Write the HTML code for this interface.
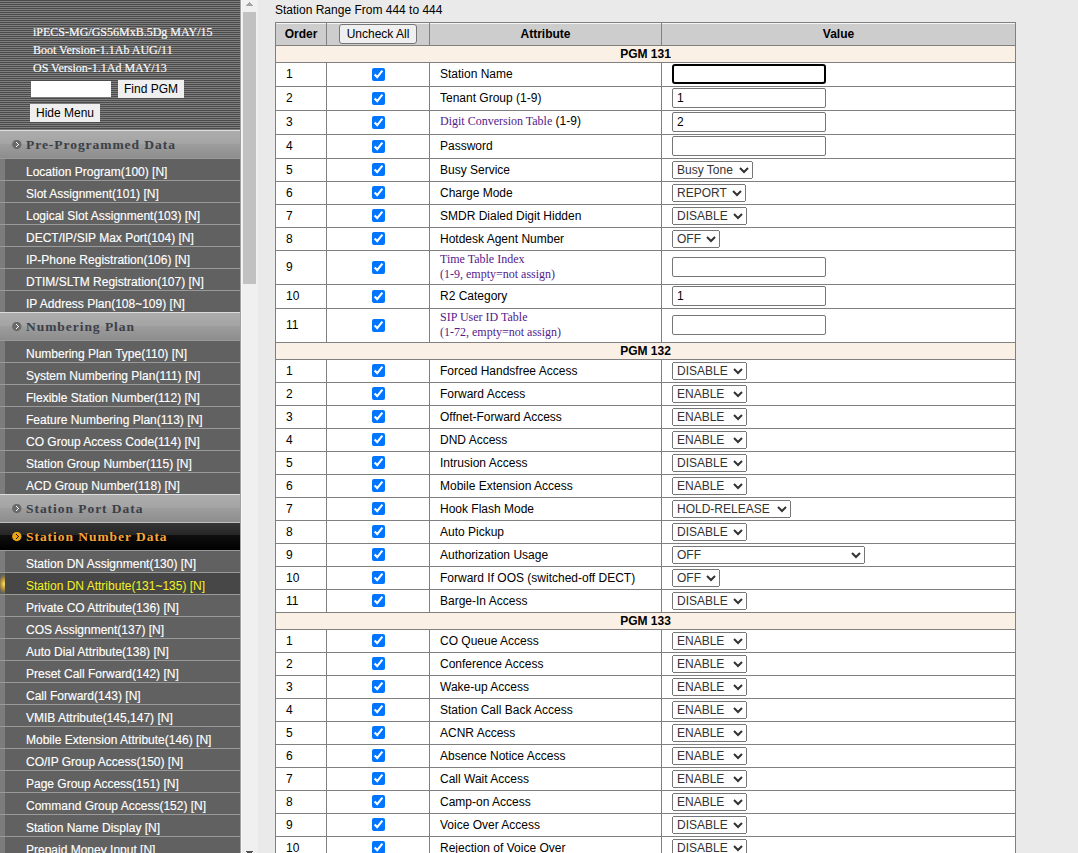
<!DOCTYPE html>
<html><head><meta charset="utf-8">
<style>
*{box-sizing:border-box}
html,body{margin:0;padding:0;width:1078px;height:853px;overflow:hidden;background:#eaeaea;font-family:"Liberation Sans",sans-serif}
#side{position:absolute;left:0;top:0;width:240px;height:853px;background:#616161;overflow:hidden}
#top{position:absolute;left:0;top:0;width:240px;height:130px;background:repeating-linear-gradient(to bottom,#4b4b4b 0,#4b4b4b 1px,#7e7e7e 1px,#7e7e7e 2px)}
.ver{position:absolute;left:33px;font-family:"Liberation Serif",serif;font-size:12px;color:#fff;-webkit-text-stroke:0.12px #fff;white-space:nowrap;line-height:14px}
#pgm{position:absolute;left:31px;top:81px;width:80px;height:16px;background:#fff}
.btn{position:absolute;background:#efefef;font-size:12px;color:#000;text-align:center;white-space:nowrap}
.hdr{position:absolute;left:0;width:240px;height:28px;background:linear-gradient(to bottom,#dcdcdc 0,#dcdcdc 1px,#adadad 1px,#a4a4a4 50%,#9d9d9d 50%,#8d8d8d 100%)}
.hdr span{position:absolute;left:26px;top:7px;font-family:"Liberation Serif",serif;font-weight:bold;font-size:13.5px;letter-spacing:0.95px;color:#3c4047;white-space:nowrap;line-height:16px}
.hdr svg{position:absolute;left:12px;top:10px;width:10px;height:10px}
.hdr.act{background:linear-gradient(to bottom,#c0c0c0 0,#c0c0c0 1px,#353535 1px,#272727 46%,#0f0f0f 46%,#000 100%)}
.hdr.act span{color:#f7a63a;text-shadow:1px 1px 1px #000}

.itm{position:absolute;left:0;width:240px;height:22px;border-top:1px solid #9a9a9a;background:#616161}
.itm:before{content:"";position:absolute;left:0;top:0;width:5px;height:21px;background:#7c7c7c}
.itm span{position:absolute;left:26px;top:6px;font-size:12px;color:#fff;-webkit-text-stroke:0.15px #fff;white-space:nowrap;line-height:14px}
.itm.sel{background:#474747}
.itm.sel span{color:#f2f03a;-webkit-text-stroke-color:#f2f03a}
#sbar{position:absolute;left:240px;top:0;width:18px;height:853px;background:#f0f0f0;border-left:1px solid #a0a0a0;box-shadow:inset 1px 0 0 #f8f8f8}
#aup{position:absolute;left:5px;top:2px;width:7px;height:4px}
#adn{position:absolute;left:5px;top:851px;width:7px;height:4px}
#thumb{position:absolute;left:2px;top:12px;width:13px;height:272px;background:#c1c1c1}
#main{position:absolute;left:258px;top:0;width:820px;height:853px;background:#eaeaea}
#range{position:absolute;left:275px;top:3px;font-size:12px;color:#000;white-space:nowrap;line-height:14px}
#tb{position:absolute;left:275px;top:22px;border-collapse:collapse;table-layout:fixed;width:740px;font-size:12px;color:#000}
#tb td{border:1px solid #808080;padding:0 0 2px 10px;white-space:nowrap;background:#fff;vertical-align:middle}
#tb tr.hd td{background:#cdcdcd;box-shadow:inset 0 1px 0 #f5f5f5;font-weight:bold;text-align:center;padding:0}
#tb tr.pg td{background:#faf0e6;font-weight:bold;text-align:center;padding:0;height:17px}
#tb td.c2{text-align:center;padding:0 0 2px 0}
#tb td.c4{padding-left:10px}
#tb input[type=checkbox]{margin:0;width:13px;height:13px;vertical-align:middle}
.ti{width:154px;height:20px;border:1px solid #767676;border-radius:2px;font:12px "Liberation Sans",sans-serif;padding:1px 4px;margin:0;vertical-align:middle}
.ti.foc{border:2px solid #000;border-radius:3px}
select{font:12px "Liberation Sans",sans-serif;height:18px;margin:0;vertical-align:middle;color:#333}
.lk,.lk2{font-family:"Liberation Serif",serif;color:#551a8b}
.lk2{display:inline-block;line-height:15px}
.ub{display:inline-block;border:1px solid #767676;border-radius:3px;background:#efefef;font-weight:normal;padding:2px 7px}

#tb tr.h23 td{padding-bottom:1px}
#tb tr.h23 td.c2{padding-bottom:2px}
.itm.sel:before{background:radial-gradient(ellipse 6px 10px at 4px 11px,#f2e57a 0,#d2a838 35%,#8a7a4a 70%,#5e5e5e 100%)}
.itm.sel span{text-shadow:0 0 1px #000}

</style></head><body>
<div id="main"></div>
<div id="range">Station Range From 444 to 444</div>
<table id="tb">
<colgroup><col style="width:51px"><col style="width:103px"><col style="width:232px"><col style="width:354px"></colgroup>
<tr class="hd" style="height:23px"><td>Order</td><td><span class="ub">Uncheck All</span></td><td>Attribute</td><td>Value</td></tr>
<tr class="pg"><td colspan="4">PGM 131</td></tr>
<tr class="h24" style="height:24px"><td class="c1">1</td><td class="c2"><input type="checkbox" checked></td><td class="c3">Station Name</td><td class="c4"><input type="text" class="ti foc" value=""></td></tr>
<tr class="h24" style="height:24px"><td class="c1">2</td><td class="c2"><input type="checkbox" checked></td><td class="c3">Tenant Group (1-9)</td><td class="c4"><input type="text" class="ti" value="1"></td></tr>
<tr class="h24" style="height:24px"><td class="c1">3</td><td class="c2"><input type="checkbox" checked></td><td class="c3"><span class="lk">Digit Conversion Table</span> (1-9)</td><td class="c4"><input type="text" class="ti" value="2"></td></tr>
<tr class="h24" style="height:24px"><td class="c1">4</td><td class="c2"><input type="checkbox" checked></td><td class="c3">Password</td><td class="c4"><input type="text" class="ti" value=""></td></tr>
<tr class="h23" style="height:23px"><td class="c1">5</td><td class="c2"><input type="checkbox" checked></td><td class="c3">Busy Service</td><td class="c4"><select style="width:81px"><option>Busy Tone</option></select></td></tr>
<tr class="h23" style="height:23px"><td class="c1">6</td><td class="c2"><input type="checkbox" checked></td><td class="c3">Charge Mode</td><td class="c4"><select style="width:74px"><option>REPORT</option></select></td></tr>
<tr class="h23" style="height:23px"><td class="c1">7</td><td class="c2"><input type="checkbox" checked></td><td class="c3">SMDR Dialed Digit Hidden</td><td class="c4"><select style="width:75px"><option>DISABLE</option></select></td></tr>
<tr class="h23" style="height:23px"><td class="c1">8</td><td class="c2"><input type="checkbox" checked></td><td class="c3">Hotdesk Agent Number</td><td class="c4"><select style="width:48px"><option>OFF</option></select></td></tr>
<tr class="h34" style="height:34px"><td class="c1">9</td><td class="c2"><input type="checkbox" checked></td><td class="c3"><span class="lk2">Time Table Index<br>(1-9, empty=not assign)</span></td><td class="c4"><input type="text" class="ti" value=""></td></tr>
<tr class="h24" style="height:24px"><td class="c1">10</td><td class="c2"><input type="checkbox" checked></td><td class="c3">R2 Category</td><td class="c4"><input type="text" class="ti" value="1"></td></tr>
<tr class="h34" style="height:34px"><td class="c1">11</td><td class="c2"><input type="checkbox" checked></td><td class="c3"><span class="lk2">SIP User ID Table<br>(1-72, empty=not assign)</span></td><td class="c4"><input type="text" class="ti" value=""></td></tr>
<tr class="pg"><td colspan="4">PGM 132</td></tr>
<tr class="h23" style="height:23px"><td class="c1">1</td><td class="c2"><input type="checkbox" checked></td><td class="c3">Forced Handsfree Access</td><td class="c4"><select style="width:75px"><option>DISABLE</option></select></td></tr>
<tr class="h23" style="height:23px"><td class="c1">2</td><td class="c2"><input type="checkbox" checked></td><td class="c3">Forward Access</td><td class="c4"><select style="width:75px"><option>ENABLE</option></select></td></tr>
<tr class="h23" style="height:23px"><td class="c1">3</td><td class="c2"><input type="checkbox" checked></td><td class="c3">Offnet-Forward Access</td><td class="c4"><select style="width:75px"><option>ENABLE</option></select></td></tr>
<tr class="h23" style="height:23px"><td class="c1">4</td><td class="c2"><input type="checkbox" checked></td><td class="c3">DND Access</td><td class="c4"><select style="width:75px"><option>ENABLE</option></select></td></tr>
<tr class="h23" style="height:23px"><td class="c1">5</td><td class="c2"><input type="checkbox" checked></td><td class="c3">Intrusion Access</td><td class="c4"><select style="width:75px"><option>DISABLE</option></select></td></tr>
<tr class="h23" style="height:23px"><td class="c1">6</td><td class="c2"><input type="checkbox" checked></td><td class="c3">Mobile Extension Access</td><td class="c4"><select style="width:75px"><option>ENABLE</option></select></td></tr>
<tr class="h23" style="height:23px"><td class="c1">7</td><td class="c2"><input type="checkbox" checked></td><td class="c3">Hook Flash Mode</td><td class="c4"><select style="width:119px"><option>HOLD-RELEASE</option></select></td></tr>
<tr class="h23" style="height:23px"><td class="c1">8</td><td class="c2"><input type="checkbox" checked></td><td class="c3">Auto Pickup</td><td class="c4"><select style="width:75px"><option>DISABLE</option></select></td></tr>
<tr class="h23" style="height:23px"><td class="c1">9</td><td class="c2"><input type="checkbox" checked></td><td class="c3">Authorization Usage</td><td class="c4"><select style="width:193px"><option>OFF</option></select></td></tr>
<tr class="h23" style="height:23px"><td class="c1">10</td><td class="c2"><input type="checkbox" checked></td><td class="c3">Forward If OOS (switched-off DECT)</td><td class="c4"><select style="width:48px"><option>OFF</option></select></td></tr>
<tr class="h23" style="height:23px"><td class="c1">11</td><td class="c2"><input type="checkbox" checked></td><td class="c3">Barge-In Access</td><td class="c4"><select style="width:75px"><option>DISABLE</option></select></td></tr>
<tr class="pg"><td colspan="4">PGM 133</td></tr>
<tr class="h23" style="height:23px"><td class="c1">1</td><td class="c2"><input type="checkbox" checked></td><td class="c3">CO Queue Access</td><td class="c4"><select style="width:75px"><option>ENABLE</option></select></td></tr>
<tr class="h23" style="height:23px"><td class="c1">2</td><td class="c2"><input type="checkbox" checked></td><td class="c3">Conference Access</td><td class="c4"><select style="width:75px"><option>ENABLE</option></select></td></tr>
<tr class="h23" style="height:23px"><td class="c1">3</td><td class="c2"><input type="checkbox" checked></td><td class="c3">Wake-up Access</td><td class="c4"><select style="width:75px"><option>ENABLE</option></select></td></tr>
<tr class="h23" style="height:23px"><td class="c1">4</td><td class="c2"><input type="checkbox" checked></td><td class="c3">Station Call Back Access</td><td class="c4"><select style="width:75px"><option>ENABLE</option></select></td></tr>
<tr class="h23" style="height:23px"><td class="c1">5</td><td class="c2"><input type="checkbox" checked></td><td class="c3">ACNR Access</td><td class="c4"><select style="width:75px"><option>ENABLE</option></select></td></tr>
<tr class="h23" style="height:23px"><td class="c1">6</td><td class="c2"><input type="checkbox" checked></td><td class="c3">Absence Notice Access</td><td class="c4"><select style="width:75px"><option>ENABLE</option></select></td></tr>
<tr class="h23" style="height:23px"><td class="c1">7</td><td class="c2"><input type="checkbox" checked></td><td class="c3">Call Wait Access</td><td class="c4"><select style="width:75px"><option>ENABLE</option></select></td></tr>
<tr class="h23" style="height:23px"><td class="c1">8</td><td class="c2"><input type="checkbox" checked></td><td class="c3">Camp-on Access</td><td class="c4"><select style="width:75px"><option>ENABLE</option></select></td></tr>
<tr class="h23" style="height:23px"><td class="c1">9</td><td class="c2"><input type="checkbox" checked></td><td class="c3">Voice Over Access</td><td class="c4"><select style="width:75px"><option>DISABLE</option></select></td></tr>
<tr class="h23" style="height:23px"><td class="c1">10</td><td class="c2"><input type="checkbox" checked></td><td class="c3">Rejection of Voice Over</td><td class="c4"><select style="width:75px"><option>DISABLE</option></select></td></tr>
</table>
<div id="side">
 <div id="top">
  <div class="ver" style="top:25px">iPECS-MG/GS56MxB.5Dg MAY/15</div>
  <div class="ver" style="top:43px">Boot Version-1.1Ab AUG/11</div>
  <div class="ver" style="top:61px">OS Version-1.1Ad MAY/13</div>
  <div id="pgm"></div>
  <div class="btn" style="left:118px;top:80px;width:66px;height:18px;line-height:18px">Find PGM</div>
  <div class="btn" style="left:30px;top:104px;width:70px;height:18px;line-height:18px">Hide Menu</div>
 </div>
<div class="hdr" style="top:130px"><svg viewBox="0 0 10 10"><circle cx="4.8" cy="4.5" r="4.7" fill="#6a6a6a"/><g fill="#fff" shape-rendering="crispEdges"><rect x="4" y="2" width="1" height="1"/><rect x="5" y="3" width="1" height="1"/><rect x="6" y="4" width="1" height="1"/><rect x="5" y="5" width="1" height="1"/><rect x="4" y="6" width="1" height="1"/></g></svg><span>Pre-Programmed Data</span></div>
<div class="itm" style="top:158px"><span>Location Program(100) [N]</span></div>
<div class="itm" style="top:180px"><span>Slot Assignment(101) [N]</span></div>
<div class="itm" style="top:202px"><span>Logical Slot Assignment(103) [N]</span></div>
<div class="itm" style="top:224px"><span>DECT/IP/SIP Max Port(104) [N]</span></div>
<div class="itm" style="top:246px"><span>IP-Phone Registration(106) [N]</span></div>
<div class="itm" style="top:268px"><span>DTIM/SLTM Registration(107) [N]</span></div>
<div class="itm" style="top:290px"><span>IP Address Plan(108~109) [N]</span></div>
<div class="hdr" style="top:312px"><svg viewBox="0 0 10 10"><circle cx="4.8" cy="4.5" r="4.7" fill="#6a6a6a"/><g fill="#fff" shape-rendering="crispEdges"><rect x="4" y="2" width="1" height="1"/><rect x="5" y="3" width="1" height="1"/><rect x="6" y="4" width="1" height="1"/><rect x="5" y="5" width="1" height="1"/><rect x="4" y="6" width="1" height="1"/></g></svg><span>Numbering Plan</span></div>
<div class="itm" style="top:340px"><span>Numbering Plan Type(110) [N]</span></div>
<div class="itm" style="top:362px"><span>System Numbering Plan(111) [N]</span></div>
<div class="itm" style="top:384px"><span>Flexible Station Number(112) [N]</span></div>
<div class="itm" style="top:406px"><span>Feature Numbering Plan(113) [N]</span></div>
<div class="itm" style="top:428px"><span>CO Group Access Code(114) [N]</span></div>
<div class="itm" style="top:450px"><span>Station Group Number(115) [N]</span></div>
<div class="itm" style="top:472px"><span>ACD Group Number(118) [N]</span></div>
<div class="hdr" style="top:494px"><svg viewBox="0 0 10 10"><circle cx="4.8" cy="4.5" r="4.7" fill="#6a6a6a"/><g fill="#fff" shape-rendering="crispEdges"><rect x="4" y="2" width="1" height="1"/><rect x="5" y="3" width="1" height="1"/><rect x="6" y="4" width="1" height="1"/><rect x="5" y="5" width="1" height="1"/><rect x="4" y="6" width="1" height="1"/></g></svg><span>Station Port Data</span></div>
<div class="hdr act" style="top:522px"><svg viewBox="0 0 10 10"><circle cx="4.8" cy="4.5" r="4.7" fill="#e8a317"/><g fill="#2a1400" shape-rendering="crispEdges"><rect x="4" y="2" width="1" height="1"/><rect x="5" y="3" width="1" height="1"/><rect x="6" y="4" width="1" height="1"/><rect x="5" y="5" width="1" height="1"/><rect x="4" y="6" width="1" height="1"/></g></svg><span>Station Number Data</span></div>
<div class="itm" style="top:550px"><span>Station DN Assignment(130) [N]</span></div>
<div class="itm sel" style="top:572px"><span>Station DN Attribute(131~135) [N]</span></div>
<div class="itm" style="top:594px"><span>Private CO Attribute(136) [N]</span></div>
<div class="itm" style="top:616px"><span>COS Assignment(137) [N]</span></div>
<div class="itm" style="top:638px"><span>Auto Dial Attribute(138) [N]</span></div>
<div class="itm" style="top:660px"><span>Preset Call Forward(142) [N]</span></div>
<div class="itm" style="top:682px"><span>Call Forward(143) [N]</span></div>
<div class="itm" style="top:704px"><span>VMIB Attribute(145,147) [N]</span></div>
<div class="itm" style="top:726px"><span>Mobile Extension Attribute(146) [N]</span></div>
<div class="itm" style="top:748px"><span>CO/IP Group Access(150) [N]</span></div>
<div class="itm" style="top:770px"><span>Page Group Access(151) [N]</span></div>
<div class="itm" style="top:792px"><span>Command Group Access(152) [N]</span></div>
<div class="itm" style="top:814px"><span>Station Name Display [N]</span></div>
<div class="itm" style="top:836px"><span>Prepaid Money Input [N]</span></div>
</div>
<div id="sbar"><div id="thumb"></div><svg id="aup" viewBox="0 0 7 4" shape-rendering="crispEdges" fill="#a3a3a3"><rect x="3" y="0" width="1" height="1"/><rect x="2" y="1" width="3" height="1"/><rect x="1" y="2" width="5" height="1"/><rect x="0" y="3" width="7" height="1"/></svg><svg id="adn" viewBox="0 0 7 4" shape-rendering="crispEdges" fill="#505050"><rect x="0" y="0" width="7" height="1"/><rect x="1" y="1" width="5" height="1"/><rect x="2" y="2" width="3" height="1"/><rect x="3" y="3" width="1" height="1"/></svg></div>
</body></html>
